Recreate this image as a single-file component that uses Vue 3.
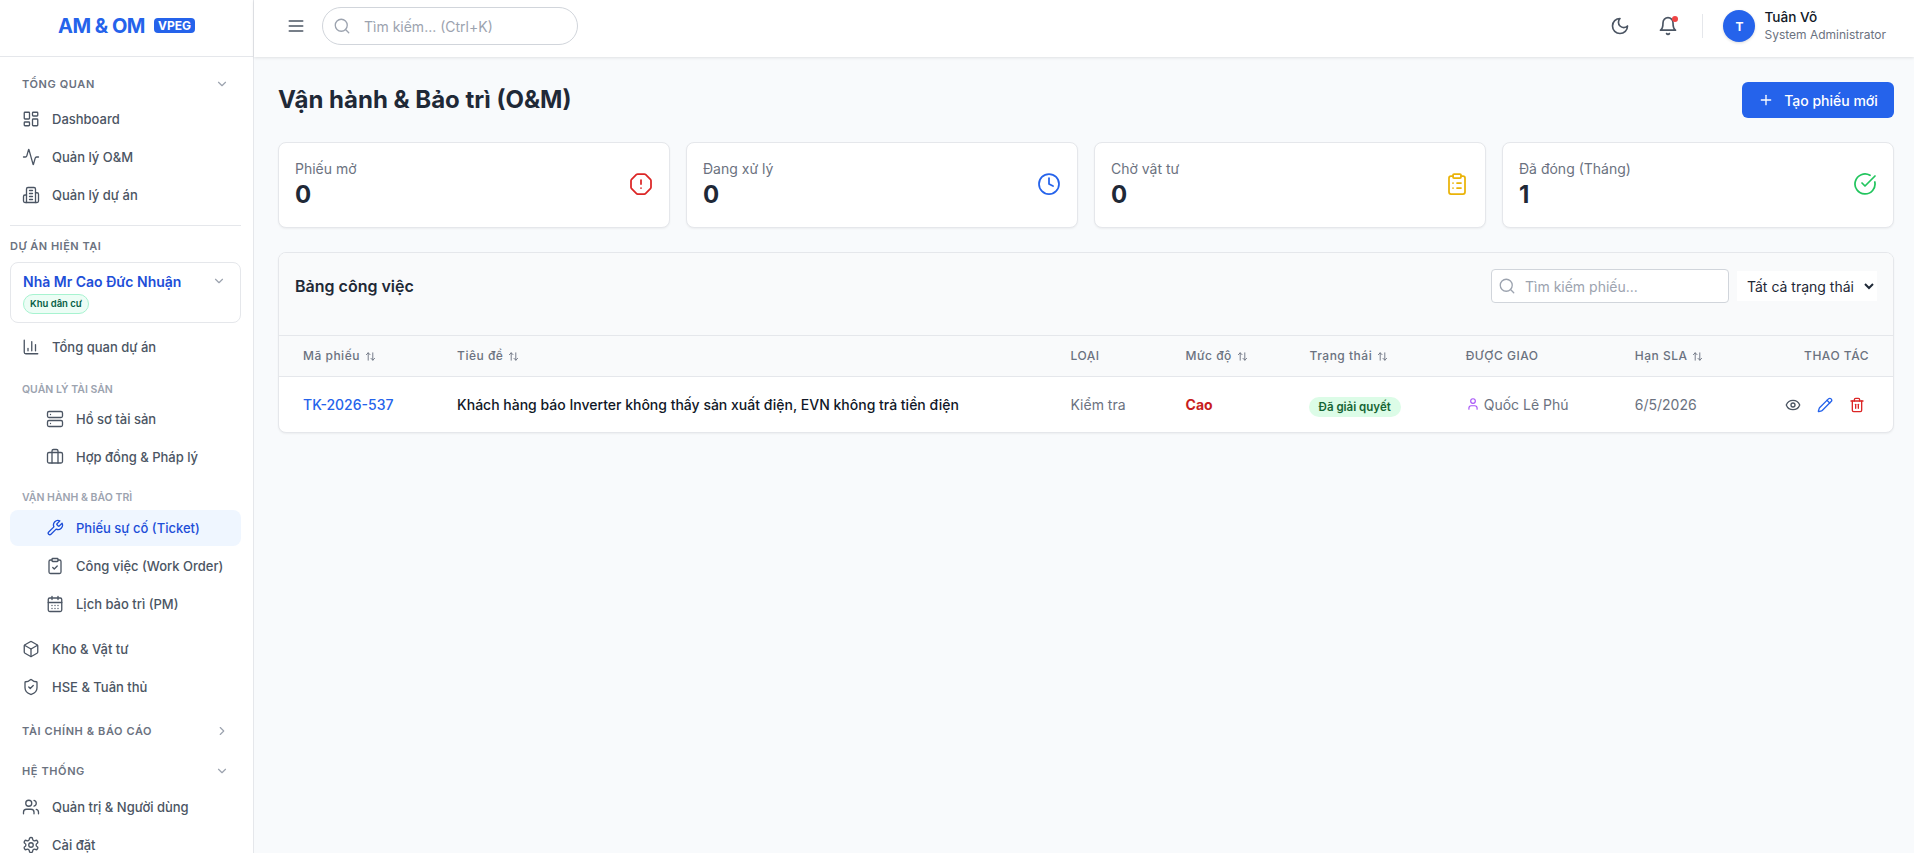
<template>
  <div class="app">
    <aside class="sidebar">
      <div class="brand">
        <span class="brand-name">AM &amp; OM</span>
        <span class="brand-tag">VPEG</span>
      </div>

      <nav class="nav">
        <div class="group-head first">
          <span>TỔNG QUAN</span>
          <svg class="chev" v-bind="svgAttrs" v-html="icons.chevronDown"></svg>
        </div>
        <div class="items">
          <a v-for="it in overview" :key="it.label" class="item">
            <svg class="ico" v-bind="svgAttrs" v-html="icons[it.icon]"></svg>{{ it.label }}
          </a>
        </div>

        <div class="divider"></div>
        <div class="current-label">DỰ ÁN HIỆN TẠI</div>
        <div class="project">
          <div class="project-top">
            <span class="project-name">Nhà Mr Cao Đức Nhuận</span>
            <svg class="chev" v-bind="svgAttrs" v-html="icons.chevronDown"></svg>
          </div>
          <span class="project-tag">Khu dân cư</span>
        </div>

        <a class="item project-first">
          <svg class="ico" v-bind="svgAttrs" v-html="icons.chart"></svg>Tổng quan dự án
        </a>

        <div class="sub-title asset">QUẢN LÝ TÀI SẢN</div>
        <div class="items">
          <a v-for="it in assets" :key="it.label" class="item sub">
            <svg class="ico" v-bind="svgAttrs" v-html="icons[it.icon]"></svg>{{ it.label }}
          </a>
        </div>

        <div class="sub-title ops">VẬN HÀNH &amp; BẢO TRÌ</div>
        <div class="items">
          <a v-for="it in ops" :key="it.label" class="item sub" :class="{ active: it.active }">
            <svg class="ico" v-bind="svgAttrs" v-html="icons[it.icon]"></svg>{{ it.label }}
          </a>
        </div>

        <div class="items after-ops">
          <a v-for="it in stock" :key="it.label" class="item">
            <svg class="ico" v-bind="svgAttrs" v-html="icons[it.icon]"></svg>{{ it.label }}
          </a>
        </div>

        <div class="group-head finance">
          <span>TÀI CHÍNH &amp; BÁO CÁO</span>
          <svg class="chev" v-bind="svgAttrs" v-html="icons.chevronRight"></svg>
        </div>
        <div class="group-head system">
          <span>HỆ THỐNG</span>
          <svg class="chev" v-bind="svgAttrs" v-html="icons.chevronDown"></svg>
        </div>
        <div class="items">
          <a v-for="it in system" :key="it.label" class="item">
            <svg class="ico" v-bind="svgAttrs" v-html="icons[it.icon]"></svg>{{ it.label }}
          </a>
        </div>
      </nav>
    </aside>

    <div class="content">
      <header class="topbar">
        <svg class="menu" v-bind="svgAttrs" v-html="icons.menu"></svg>
        <div class="top-search">
          <svg class="search-ico" v-bind="svgAttrs" v-html="icons.search"></svg>
          <input placeholder="Tìm kiếm... (Ctrl+K)" />
        </div>
        <div class="top-right">
          <svg class="top-ico" v-bind="svgAttrs" v-html="icons.moon"></svg>
          <span class="bell">
            <svg class="top-ico" v-bind="svgAttrs" v-html="icons.bell"></svg>
            <i class="dot"></i>
          </span>
          <span class="sep"></span>
          <span class="avatar">T</span>
          <div class="who">
            <div class="who-name">Tuân Võ</div>
            <div class="who-role">System Administrator</div>
          </div>
        </div>
      </header>

      <main class="main">
        <div class="title-row">
          <h1>Vận hành &amp; Bảo trì (O&amp;M)</h1>
          <button class="btn-new">
            <svg v-bind="svgAttrs" v-html="icons.plus"></svg>Tạo phiếu mới
          </button>
        </div>

        <div class="stats">
          <div v-for="s in stats" :key="s.label" class="stat">
            <div>
              <div class="stat-label">{{ s.label }}</div>
              <div class="stat-value">{{ s.value }}</div>
            </div>
            <svg class="stat-ico" :style="{ color: s.color }" v-bind="svgAttrs" v-html="icons[s.icon]"></svg>
          </div>
        </div>

        <section class="board">
          <div class="board-head">
            <h2>Bảng công việc</h2>
            <div class="board-tools">
              <div class="board-search">
                <svg class="search-ico" v-bind="svgAttrs" v-html="icons.search"></svg>
                <input placeholder="Tìm kiếm phiếu..." />
              </div>
              <select class="status-select">
                <option>Tất cả trạng thái</option>
              </select>
            </div>
          </div>

          <table>
            <colgroup>
              <col v-for="c in columns" :key="c.label" :style="{ width: c.width + 'px' }" />
            </colgroup>
            <thead>
              <tr>
                <th v-for="c in columns" :key="c.label" :class="{ right: c.right }">
                  {{ c.label }}
                  <svg v-if="c.sort" class="sort" v-bind="svgAttrs" v-html="icons.sort"></svg>
                </th>
              </tr>
            </thead>
            <tbody>
              <tr>
                <td class="code">TK-2026-537</td>
                <td class="subject">Khách hàng báo Inverter không thấy sản xuất điện, EVN không trả tiền điện</td>
                <td>Kiểm tra</td>
                <td class="level">Cao</td>
                <td><span class="state">Đã giải quyết</span></td>
                <td>
                  <span class="assignee">
                    <svg class="user-ico" v-bind="svgAttrs" v-html="icons.user"></svg>Quốc Lê Phú
                  </span>
                </td>
                <td>6/5/2026</td>
                <td>
                  <div class="actions">
                    <svg class="act view" v-bind="svgAttrs" v-html="icons.eye"></svg>
                    <svg class="act edit" v-bind="svgAttrs" v-html="icons.pencil"></svg>
                    <svg class="act del" v-bind="svgAttrs" v-html="icons.trash"></svg>
                  </div>
                </td>
              </tr>
            </tbody>
          </table>
        </section>
      </main>
    </div>
  </div>
</template>

<script setup>
const svgAttrs = {
  viewBox: "0 0 24 24",
  fill: "none",
  stroke: "currentColor",
  "stroke-width": 2,
  "stroke-linecap": "round",
  "stroke-linejoin": "round",
};

const clipBody =
  '<rect width="8" height="4" x="8" y="2" rx="1" ry="1"/><path d="M16 4h2a2 2 0 0 1 2 2v14a2 2 0 0 1-2 2H6a2 2 0 0 1-2-2V6a2 2 0 0 1 2-2h2"/>';

const icons = {
  chevronDown: '<path d="m6 9 6 6 6-6"/>',
  chevronRight: '<path d="m9 18 6-6-6-6"/>',
  dashboard:
    '<rect width="7" height="9" x="3" y="3" rx="1"/><rect width="7" height="5" x="14" y="3" rx="1"/><rect width="7" height="9" x="14" y="12" rx="1"/><rect width="7" height="5" x="3" y="16" rx="1"/>',
  activity:
    '<path d="M22 12h-2.48a2 2 0 0 0-1.93 1.46l-2.35 8.36a.25.25 0 0 1-.48 0L9.24 2.18a.25.25 0 0 0-.48 0l-2.35 8.36A2 2 0 0 1 4.49 12H2"/>',
  building:
    '<path d="M6 22V4a2 2 0 0 1 2-2h8a2 2 0 0 1 2 2v18Z"/><path d="M6 12H4a2 2 0 0 0-2 2v6a2 2 0 0 0 2 2h2"/><path d="M18 9h2a2 2 0 0 1 2 2v9a2 2 0 0 1-2 2h-2"/><path d="M10 6h4"/><path d="M10 10h4"/><path d="M10 14h4"/><path d="M10 18h4"/>',
  chart: '<path d="M3 3v16a2 2 0 0 0 2 2h16"/><path d="M18 17V9"/><path d="M13 17V5"/><path d="M8 17v-3"/>',
  server:
    '<rect width="20" height="8" x="2" y="2" rx="2" ry="2"/><rect width="20" height="8" x="2" y="14" rx="2" ry="2"/><line x1="6" x2="6.01" y1="6" y2="6"/><line x1="6" x2="6.01" y1="18" y2="18"/>',
  briefcase:
    '<path d="M16 20V4a2 2 0 0 0-2-2h-4a2 2 0 0 0-2 2v16"/><rect width="20" height="14" x="2" y="6" rx="2"/>',
  wrench:
    '<path d="M14.7 6.3a1 1 0 0 0 0 1.4l1.6 1.6a1 1 0 0 0 1.4 0l3.77-3.77a6 6 0 0 1-7.94 7.94l-6.91 6.91a2.12 2.12 0 0 1-3-3l6.91-6.91a6 6 0 0 1 7.94-7.94l-3.76 3.76z"/>',
  clipCheck: clipBody + '<path d="m9 14 2 2 4-4"/>',
  clipList: clipBody + '<path d="M12 11h4"/><path d="M12 16h4"/><path d="M8 11h.01"/><path d="M8 16h.01"/>',
  calendar:
    '<path d="M8 2v4"/><path d="M16 2v4"/><rect width="18" height="18" x="3" y="4" rx="2"/><path d="M3 10h18"/><path d="M8 14h.01"/><path d="M12 14h.01"/><path d="M16 14h.01"/><path d="M8 18h.01"/><path d="M12 18h.01"/><path d="M16 18h.01"/>',
  box: '<path d="M21 8a2 2 0 0 0-1-1.73l-7-4a2 2 0 0 0-2 0l-7 4A2 2 0 0 0 3 8v8a2 2 0 0 0 1 1.73l7 4a2 2 0 0 0 2 0l7-4A2 2 0 0 0 21 16Z"/><path d="m3.3 7 8.7 5 8.7-5"/><path d="M12 22V12"/>',
  shield:
    '<path d="M20 13c0 5-3.5 7.5-7.66 8.95a1 1 0 0 1-.67-.01C7.5 20.5 4 18 4 13V6a1 1 0 0 1 1-1c2 0 4.5-1.2 6.24-2.72a1.17 1.17 0 0 1 1.52 0C14.51 3.81 17 5 19 5a1 1 0 0 1 1 1z"/><path d="m9 12 2 2 4-4"/>',
  users:
    '<path d="M16 21v-2a4 4 0 0 0-4-4H6a4 4 0 0 0-4 4v2"/><circle cx="9" cy="7" r="4"/><path d="M22 21v-2a4 4 0 0 0-3-3.87"/><path d="M16 3.13a4 4 0 0 1 0 7.75"/>',
  settings:
    '<path d="M12.22 2h-.44a2 2 0 0 0-2 2v.18a2 2 0 0 1-1 1.73l-.43.25a2 2 0 0 1-2 0l-.15-.08a2 2 0 0 0-2.73.73l-.22.38a2 2 0 0 0 .73 2.73l.15.1a2 2 0 0 1 1 1.72v.51a2 2 0 0 1-1 1.74l-.15.09a2 2 0 0 0-.73 2.73l.22.38a2 2 0 0 0 2.73.73l.15-.08a2 2 0 0 1 2 0l.43.25a2 2 0 0 1 1 1.73V20a2 2 0 0 0 2 2h.44a2 2 0 0 0 2-2v-.18a2 2 0 0 1 1-1.73l.43-.25a2 2 0 0 1 2 0l.15.08a2 2 0 0 0 2.73-.73l.22-.39a2 2 0 0 0-.73-2.73l-.15-.08a2 2 0 0 1-1-1.74v-.5a2 2 0 0 1 1-1.74l.15-.09a2 2 0 0 0 .73-2.73l-.22-.38a2 2 0 0 0-2.73-.73l-.15.08a2 2 0 0 1-2 0l-.43-.25a2 2 0 0 1-1-1.73V4a2 2 0 0 0-2-2z"/><circle cx="12" cy="12" r="3"/>',
  menu: '<path d="M4 6h16"/><path d="M4 12h16"/><path d="M4 18h16"/>',
  search: '<circle cx="11" cy="11" r="8"/><path d="m21 21-4.3-4.3"/>',
  moon: '<path d="M12 3a6 6 0 0 0 9 9 9 9 0 1 1-9-9Z"/>',
  bell: '<path d="M6 8a6 6 0 0 1 12 0c0 7 3 9 3 9H3s3-2 3-9"/><path d="M10.3 21a1.94 1.94 0 0 0 3.4 0"/>',
  plus: '<path d="M5 12h14"/><path d="M12 5v14"/>',
  alert:
    '<path d="M12 16h.01"/><path d="M12 8v4"/><path d="M15.312 2a2 2 0 0 1 1.414.586l4.688 4.688A2 2 0 0 1 22 8.688v6.624a2 2 0 0 1-.586 1.414l-4.688 4.688a2 2 0 0 1-1.414.586H8.688a2 2 0 0 1-1.414-.586l-4.688-4.688A2 2 0 0 1 2 15.312V8.688a2 2 0 0 1 .586-1.414l4.688-4.688A2 2 0 0 1 8.688 2z"/>',
  clock: '<circle cx="12" cy="12" r="10"/><polyline points="12 6 12 12 16 14"/>',
  check: '<path d="M21.801 10A10 10 0 1 1 17 3.335"/><path d="m9 11 3 3L22 4"/>',
  sort: '<path d="m21 16-4 4-4-4"/><path d="M17 20V4"/><path d="m3 8 4-4 4 4"/><path d="M7 4v16"/>',
  user: '<path d="M19 21v-2a4 4 0 0 0-4-4H9a4 4 0 0 0-4 4v2"/><circle cx="12" cy="7" r="4"/>',
  eye: '<path d="M2.062 12.348a1 1 0 0 1 0-.696 10.75 10.75 0 0 1 19.876 0 1 1 0 0 1 0 .696 10.75 10.75 0 0 1-19.876 0"/><circle cx="12" cy="12" r="3"/>',
  pencil:
    '<path d="M21.174 6.812a1 1 0 0 0-3.986-3.987L3.842 16.174a2 2 0 0 0-.5.83l-1.321 4.352a.5.5 0 0 0 .623.622l4.353-1.32a2 2 0 0 0 .83-.497z"/><path d="m15 5 4 4"/>',
  trash:
    '<path d="M3 6h18"/><path d="M19 6v14c0 1-1 2-2 2H7c-1 0-2-1-2-2V6"/><path d="M8 6V4c0-1 1-2 2-2h4c1 0 2 1 2 2v2"/><line x1="10" x2="10" y1="11" y2="17"/><line x1="14" x2="14" y1="11" y2="17"/>',
};

const overview = [
  { label: "Dashboard", icon: "dashboard" },
  { label: "Quản lý O&M", icon: "activity" },
  { label: "Quản lý dự án", icon: "building" },
];
const assets = [
  { label: "Hồ sơ tài sản", icon: "server" },
  { label: "Hợp đồng & Pháp lý", icon: "briefcase" },
];
const ops = [
  { label: "Phiếu sự cố (Ticket)", icon: "wrench", active: true },
  { label: "Công việc (Work Order)", icon: "clipCheck" },
  { label: "Lịch bảo trì (PM)", icon: "calendar" },
];
const stock = [
  { label: "Kho & Vật tư", icon: "box" },
  { label: "HSE & Tuân thủ", icon: "shield" },
];
const system = [
  { label: "Quản trị & Người dùng", icon: "users" },
  { label: "Cài đặt", icon: "settings" },
];

const stats = [
  { label: "Phiếu mở", value: 0, icon: "alert", color: "#dc2626" },
  { label: "Đang xử lý", value: 0, icon: "clock", color: "#2563eb" },
  { label: "Chờ vật tư", value: 0, icon: "clipList", color: "#eab308" },
  { label: "Đã đóng (Tháng)", value: 1, icon: "check", color: "#22c55e" },
];

const columns = [
  { label: "Mã phiếu", width: 154, sort: true },
  { label: "Tiêu đề", width: 613, sort: true },
  { label: "LOẠI", width: 115 },
  { label: "Mức độ", width: 124, sort: true },
  { label: "Trạng thái", width: 156, sort: true },
  { label: "ĐƯỢC GIAO", width: 169 },
  { label: "Hạn SLA", width: 130, sort: true },
  { label: "THAO TÁC", width: 152, right: true },
];
</script>

<style>
html,
body {
  margin: 0;
  height: 100%;
  overflow: hidden;
}
</style>

<style scoped>
.app {
  display: flex;
  height: 100vh;
  overflow: hidden;
  background: #f8fafc;
  color: #1f2937;
  font-family: Inter, "Noto Sans", sans-serif;
}
.sidebar {
  width: 254px;
  flex-shrink: 0;
  box-sizing: border-box;
  background: #fff;
  border-right: 1px solid #e5e7eb;
  overflow: hidden;
}
.brand {
  height: 57px;
  box-sizing: border-box;
  border-bottom: 1px solid #e5e7eb;
  display: flex;
  align-items: center;
  justify-content: center;
  gap: 9px;
  padding-bottom: 5px;
}
.brand-name {
  font-size: 20px;
  font-weight: 700;
  color: #2563eb;
  letter-spacing: -0.5px;
}
.brand-tag {
  background: #2563eb;
  color: #fff;
  font-size: 12px;
  font-weight: 700;
  line-height: 15px;
  padding: 0 4px;
  border-radius: 4px;
}
.nav {
  padding: 0 12px 0 10px;
}
.group-head {
  display: flex;
  align-items: center;
  justify-content: space-between;
  padding: 0 12px;
  height: 16px;
  font-size: 11px;
  font-weight: 600;
  letter-spacing: 0.6px;
  color: #6b7280;
}
.group-head.first {
  margin-top: 19px;
  margin-bottom: 9px;
}
.group-head.finance {
  margin-top: 18px;
}
.group-head.system {
  margin-top: 24px;
  margin-bottom: 10px;
}
.chev {
  width: 14px;
  height: 14px;
  color: #9ca3af;
  stroke-width: 2;
}
.items {
  display: flex;
  flex-direction: column;
  gap: 2px;
}
.item {
  display: flex;
  align-items: center;
  gap: 12px;
  height: 36px;
  padding-left: 12px;
  border-radius: 8px;
  font-size: 13px;
  font-weight: 500;
  color: #4b5563;
}
.item.sub {
  padding-left: 36px;
}
.item.active {
  background: #eff6ff;
  color: #1d4ed8;
}
.ico {
  width: 18px;
  height: 18px;
  flex-shrink: 0;
  stroke-width: 1.75;
}
.divider {
  height: 1px;
  background: #e5e7eb;
  margin-top: 12px;
}
.current-label {
  margin-top: 14px;
  font-size: 11px;
  font-weight: 600;
  line-height: 13px;
  letter-spacing: 0.5px;
  color: #6b7280;
}
.project {
  margin-top: 9px;
  height: 61px;
  box-sizing: border-box;
  border: 1px solid #e5e7eb;
  border-radius: 8px;
  padding: 8px 12px;
}
.project-top {
  display: flex;
  align-items: center;
  justify-content: space-between;
  height: 20px;
}
.project-top .chev {
  margin-right: 2px;
}
.project-name {
  font-size: 14px;
  font-weight: 600;
  color: #1d4ed8;
}
.project-tag {
  display: inline-block;
  box-sizing: border-box;
  margin-top: 3px;
  padding: 0 6px;
  height: 20px;
  line-height: 18px;
  border: 1px solid #a7f3d0;
  border-radius: 10px;
  background: #ecfdf5;
  color: #065f46;
  font-size: 9.5px;
  font-weight: 600;
  vertical-align: top;
}
.project-first {
  margin-top: 6px;
}
.sub-title {
  padding-left: 12px;
  font-size: 10.5px;
  font-weight: 600;
  line-height: 14px;
  color: #9ca3af;
}
.sub-title.asset {
  margin-top: 18px;
  margin-bottom: 4px;
}
.sub-title.ops {
  margin-top: 16px;
  margin-bottom: 5px;
}
.after-ops {
  margin-top: 9px;
}
.content {
  flex: 1;
  min-width: 0;
  display: flex;
  flex-direction: column;
}
.topbar {
  height: 57px;
  box-sizing: border-box;
  flex-shrink: 0;
  background: #fff;
  box-shadow: 0 1px 3px rgba(0, 0, 0, 0.1);
  display: flex;
  align-items: center;
  padding: 0 28px 5px 32px;
}
.menu {
  width: 20px;
  height: 20px;
  color: #4b5563;
}
.top-search {
  position: relative;
  margin-left: 16px;
}
.top-search input {
  box-sizing: border-box;
  display: block;
  width: 256px;
  height: 38px;
  padding: 0 12px 0 41px;
  border: 1px solid #d1d5db;
  border-radius: 19px;
  background: #fff;
  font: 14px Inter, sans-serif;
  outline: none;
}
input::placeholder {
  color: #9ca3af;
}
.search-ico {
  position: absolute;
  left: 11px;
  top: 50%;
  width: 18px;
  height: 18px;
  margin-top: -9px;
  color: #9ca3af;
  stroke-width: 1.75;
}
.top-right {
  margin-left: auto;
  display: flex;
  align-items: center;
}
.top-ico {
  width: 20px;
  height: 20px;
  color: #4b5563;
  display: block;
}
.bell {
  position: relative;
  margin-left: 28px;
}
.dot {
  position: absolute;
  top: 0;
  right: 0;
  width: 6px;
  height: 6px;
  border-radius: 50%;
  background: #ef4444;
}
.sep {
  width: 1px;
  height: 24px;
  background: #e5e7eb;
  margin: 0 20px 0 24px;
}
.avatar {
  width: 32px;
  height: 32px;
  border-radius: 50%;
  background: #2563eb;
  color: #fff;
  font-size: 12px;
  font-weight: 700;
  display: flex;
  align-items: center;
  justify-content: center;
  box-shadow: 0 1px 3px rgba(0, 0, 0, 0.15);
}
.who {
  margin-left: 9px;
}
.who-name {
  font-size: 13.6px;
  font-weight: 500;
  line-height: 18px;
  color: #111827;
}
.who-role {
  font-size: 12px;
  line-height: 18px;
  color: #6b7280;
}
.main {
  flex: 1;
  padding: 25px 20px 0 24px;
}
.title-row {
  display: flex;
  align-items: center;
  justify-content: space-between;
  height: 36px;
}
h1 {
  margin: 0 0 2px;
  font-size: 24px;
  font-weight: 700;
  color: #1f2937;
}
.btn-new {
  box-sizing: border-box;
  width: 152px;
  height: 36px;
  display: flex;
  align-items: center;
  justify-content: center;
  gap: 10px;
  border: 0;
  border-radius: 6px;
  background: #2563eb;
  color: #fff;
  font: 500 14px Inter, sans-serif;
}
.btn-new svg {
  width: 16px;
  height: 16px;
}
.stats {
  margin-top: 24px;
  display: grid;
  grid-template-columns: repeat(4, 1fr);
  gap: 16px;
}
.stat {
  height: 86px;
  box-sizing: border-box;
  display: flex;
  align-items: center;
  justify-content: space-between;
  padding: 0 16px 2px;
  background: #fff;
  border: 1px solid #e5e7eb;
  border-radius: 8px;
  box-shadow: 0 1px 2px rgba(0, 0, 0, 0.05);
}
.stat-label {
  font-size: 14px;
  line-height: 20px;
  margin-bottom: 2px;
  color: #6b7280;
}
.stat-value {
  font-size: 24px;
  font-weight: 700;
  line-height: 28px;
  color: #1f2937;
}
.stat-ico {
  width: 24px;
  height: 24px;
  stroke-width: 1.75;
}
.board {
  margin-top: 24px;
  background: #fff;
  border: 1px solid #e5e7eb;
  border-radius: 8px;
  box-shadow: 0 1px 2px rgba(0, 0, 0, 0.05);
  overflow: hidden;
}
.board-head {
  box-sizing: border-box;
  height: 83px;
  display: flex;
  justify-content: space-between;
  padding: 16px 16px 0;
  background: #f9fafb;
  border-bottom: 1px solid #e5e7eb;
}
h2 {
  margin: 0;
  font-size: 16px;
  font-weight: 600;
  line-height: 34px;
  color: #1f2937;
}
.board-tools {
  display: flex;
  gap: 8px;
  height: 34px;
}
.board-search {
  position: relative;
}
.board-search .search-ico {
  left: 7px;
}
.board-search input {
  box-sizing: border-box;
  display: block;
  width: 238px;
  height: 34px;
  padding: 0 12px 0 33px;
  border: 1px solid #d1d5db;
  border-radius: 4px;
  background: #fff;
  font: 14px Inter, sans-serif;
  outline: none;
}
.status-select {
  width: 140px;
  height: 30px;
  margin-top: 2px;
  padding: 0 0 0 6px;
  border: 0;
  background: #fff;
  color: #1f2937;
  font: 14px Inter, sans-serif;
  outline: none;
}
table {
  width: 100%;
  border-collapse: collapse;
  table-layout: fixed;
}
th {
  height: 40px;
  box-sizing: border-box;
  padding: 0 24px;
  background: #f9fafb;
  border-bottom: 1px solid #e5e7eb;
  text-align: left;
  font-size: 12px;
  font-weight: 500;
  letter-spacing: 0.5px;
  color: #6b7280;
  white-space: nowrap;
}
th.right {
  text-align: right;
}
.sort {
  width: 11px;
  height: 11px;
  margin-left: 1px;
  vertical-align: -2px;
}
td {
  height: 56px;
  box-sizing: border-box;
  padding: 1px 24px 0;
  font-size: 14px;
  color: #6b7280;
  white-space: nowrap;
}
.code {
  color: #2563eb;
  font-weight: 500;
}
.subject {
  color: #111827;
  font-weight: 500;
}
.level {
  color: #c81e1e;
  font-weight: 700;
}
.state {
  display: inline-block;
  margin: 5px 0 0 -1px;
  padding: 0 10px;
  height: 20px;
  line-height: 20px;
  border-radius: 10px;
  background: #dcfce7;
  color: #166534;
  font-size: 11.5px;
  font-weight: 600;
  vertical-align: middle;
}
.assignee {
  display: inline-flex;
  align-items: center;
  gap: 4px;
}
.user-ico {
  width: 14px;
  height: 14px;
  color: #a855f7;
}
.actions {
  display: flex;
  justify-content: flex-end;
  gap: 16px;
  margin-right: 4px;
}
.act {
  width: 16px;
  height: 16px;
}
.view {
  color: #4b5563;
}
.edit {
  color: #2563eb;
}
.del {
  color: #dc2626;
}
</style>
